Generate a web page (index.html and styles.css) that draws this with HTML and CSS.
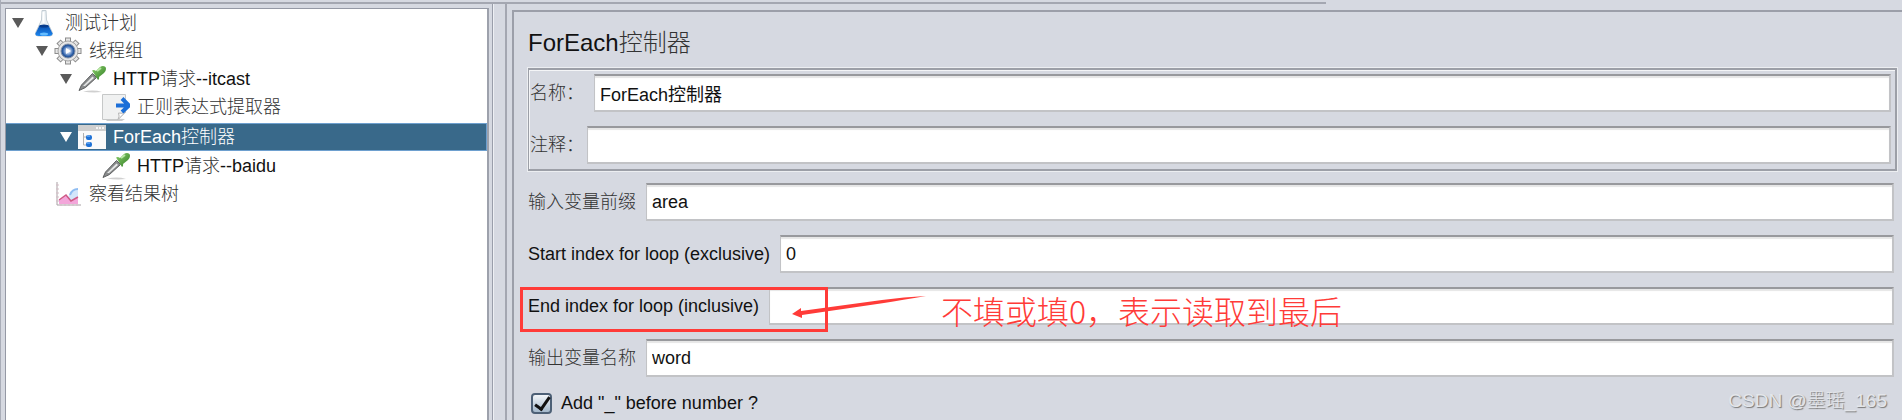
FILE: index.html
```
<!DOCTYPE html>
<html lang="zh-CN">
<head>
	<meta charset="UTF-8">
	<title>ForEach控制器</title>
	<link rel="stylesheet" href="styles.css">
</head>
<body>
	<svg class="defs" aria-hidden="true">
		<defs>
			<linearGradient id="gGreen" x1="0" y1="0" x2="1" y2="1">
				<stop offset="0" stop-color="#8fd070"/>
				<stop offset="1" stop-color="#2f7d22"/>
			</linearGradient>
			<linearGradient id="gBlue" x1="0" y1="0" x2="0" y2="1">
				<stop offset="0" stop-color="#0a4fae"/>
				<stop offset="1" stop-color="#1c86f0"/>
			</linearGradient>
			<radialGradient id="gBall">
				<stop offset="0" stop-color="#f4f8ff"/>
				<stop offset="0.35" stop-color="#a9c0e4"/>
				<stop offset="0.75" stop-color="#2c5fa8"/>
				<stop offset="1" stop-color="#1d4482"/>
			</radialGradient>
			<symbol id="dropper" viewBox="0 0 28 28">
				<path d="M5 26.500Q16 24.500 24 27Q14 28 5 26.500Z" fill="#d0d0d0"/>
				<path d="M1 25.500L3.500 20L14.500 8.500L18.500 12.500L7.500 22.500Z" fill="#8a8c8d" stroke="#5d5f60" stroke-width="1"/>
				<path d="M5 21L14.500 11.500L16 13L7 21Z" fill="#e8e9e9"/>
				<path d="M14 5.500Q16 4.500 18 6L22 2Q25 0 27.500 2Q29 5 26 8L21 12Q21.500 14 20 15Z" fill="url(#gGreen)"/>
				<path d="M19 6L23 3" stroke="#b9e8a4" stroke-width="2"/>
			</symbol>
		</defs>
	</svg>

	<div class="toolbar-line"></div>
	<div class="main">
		<div class="tree-wrap">
			<ul class="tree">
				<li class="lv0">
					<span class="arr"></span>
					<span class="ico"><svg width="20" height="28" viewBox="0 0 20 28">
						<path d="M8 1.500L7.500 11L1.500 24Q1 27 4 27H16Q19 27 18.500 24L12.500 11L12 1.500Z" fill="#eaf0f4" stroke="#c3cdd4"/>
						<path d="M5.500 16.500H14.500L18.500 24.500Q18 27 15 27H5Q1 27 1.500 24.500Z" fill="url(#gBlue)"/>
						<ellipse cx="10" cy="17" rx="4.500" ry="1.500" fill="#073b8c"/>
						<path d="M9.500 3V14" stroke="#fff" stroke-width="2"/>
						<ellipse cx="10" cy="25" rx="4" ry="1.500" fill="#64bcff"/>
					</svg></span>
					<span class="txt zh">测试计划</span>
				</li>
				<li class="lv1">
					<span class="arr"></span>
					<span class="ico"><svg width="28" height="28" viewBox="0 0 28 28">
						<g fill="none" stroke="#8c8c8c" stroke-width="6">
							<path d="M14 0.500V27.500M0.500 14H27.500M4.500 4.500L23.500 23.500M23.500 4.500L4.500 23.500"/>
						</g>
						<g fill="none" stroke="#e6e6e6" stroke-width="4">
							<path d="M14 1.500V26.500M1.500 14H26.500M5.200 5.200L22.800 22.800M22.800 5.200L5.200 22.800"/>
						</g>
						<circle cx="14" cy="14" r="10" fill="#e6e6e6" stroke="#a4a4a4"/>
						<circle cx="14" cy="14" r="7" fill="url(#gBall)" stroke="#8291a8"/>
						<path d="M12 11L17 14L12 17Z" fill="#fff"/>
					</svg></span>
					<span class="txt zh">线程组</span>
				</li>
				<li class="lv2">
					<span class="arr"></span>
					<span class="ico"><svg width="28" height="28"><use href="#dropper"/></svg></span>
					<span class="txt">HTTP<span class="zh">请求</span>--itcast</span>
				</li>
				<li class="lv3">
					<span class="arr none"></span>
					<span class="ico"><svg width="28" height="28" viewBox="0 0 28 28">
						<path d="M4 27Q14 25 23 26L20 28H5Z" fill="#ccc"/>
						<path d="M0.500 1.500H23.500V19L16 26.500H0.500Z" fill="#f0f1f1" stroke="#c6c8c8"/>
						<path d="M16 26.500Q18 23 16.500 20Q20 21 23.500 19Z" fill="#fff" stroke="#b5b5b5"/>
						<path d="M14 12.500H26M20 5.500L27 12.500L20 19" fill="none" stroke="#1c6fd8" stroke-width="4"/>
					</svg></span>
					<span class="txt zh">正则表达式提取器</span>
				</li>
				<li class="lv2 selected">
					<span class="arr"></span>
					<span class="ico"><svg width="28" height="26" viewBox="0 0 28 26">
						<rect x="0" y="1" width="28" height="24" fill="#fafafa"/>
						<rect x="0" y="1" width="28" height="6" fill="#cfcfcf"/>
						<path d="M18 4H26" stroke="#f5f5f5" stroke-width="2" stroke-dasharray="2 1"/>
						<path d="M5.500 9V21M5.500 13H9M5.500 21H9" fill="none" stroke="#b0b0b0"/>
						<rect x="8" y="11" width="6" height="5" rx="2" fill="#1f72d6"/>
						<rect x="8" y="18" width="6" height="5" rx="2" fill="#1f72d6"/>
						<path d="M9 12H12M9 19H12" stroke="#8cc4ff"/>
					</svg></span>
					<span class="txt">ForEach<span class="zh">控制器</span></span>
				</li>
				<li class="lv3">
					<span class="arr none"></span>
					<span class="ico"><svg width="28" height="28"><use href="#dropper"/></svg></span>
					<span class="txt">HTTP<span class="zh">请求</span>--baidu</span>
				</li>
				<li class="lv1">
					<span class="arr none"></span>
					<span class="ico"><svg width="26" height="26" viewBox="0 0 26 26">
						<path d="M2 1V24H26" fill="none" stroke="#a8a0a4"/>
						<path d="M1 4H4M1 8H4M1 12H4M1 16H4M1 20H4M6 22V25M10 22V25M14 22V25M18 22V25M22 22V25" stroke="#d3bcc5"/>
						<path d="M13 17Q15 8 23 8V22H13Z" fill="#d3e6fb"/>
						<path d="M15 14Q17 8 23 8" fill="none" stroke="#8fbdf2" stroke-width="2"/>
						<path d="M4 19L11 14L16 20L23 16V23H4Z" fill="#f3a6da"/>
						<path d="M4 19L11 14L16 20L23 16" fill="none" stroke="#cf5a86" stroke-width="1.500"/>
					</svg></span>
					<span class="txt zh">察看结果树</span>
				</li>
			</ul>
		</div>
		<div class="splitter"></div>
		<form class="panel">
			<h1>ForEach<span class="zh">控制器</span></h1>
			<div class="box">
				<div class="row">
					<label class="zh" for="name">名称：</label>
					<input type="text" id="name" value="ForEach控制器">
				</div>
				<div class="row tight">
					<label class="zh" for="comment">注释：</label>
					<input type="text" id="comment">
				</div>
			</div>
			<div class="row">
				<label class="zh" for="prefix">输入变量前缀</label>
				<input type="text" id="prefix" value="area">
			</div>
			<div class="row">
				<label for="start">Start index for loop (exclusive)</label>
				<input type="text" id="start" value="0">
			</div>
			<div class="row">
				<label for="end">End index for loop (inclusive)</label>
				<input type="text" id="end">
				<div class="mark"></div>
				<svg class="pointer" width="136" height="24" viewBox="0 0 136 24">
					<path d="M0 18L9 12V15L90 4Q112 1 134 0Q110 4 92 7L10 19V22Z" fill="#ff3b38"/>
				</svg>
				<span class="note">不填或填0，表示读取到最后</span>
			</div>
			<div class="row">
				<label class="zh" for="output">输出变量名称</label>
				<input type="text" id="output" value="word">
			</div>
			<div class="row check">
				<input type="checkbox" id="sep" checked>
				<label for="sep">Add "_" before number ?</label>
			</div>
		</form>
	</div>
	<div class="watermark">CSDN @墨瑶_165</div>
</body>
</html>
```
FILE: styles.css
```
*,
*::before,
*::after {
	margin: 0;
	padding: 0;
	box-sizing: border-box;
}
body {
	height: 100vh;
	overflow: hidden;
	position: relative;
	display: flex;
	flex-direction: column;
	background-color: #d6d9e1;
	border-left: 1px solid #a9adb8;
	font-family: "Liberation Sans", "Noto Sans CJK SC", sans-serif;
	font-size: 18px;
	color: #111;
}
.defs {
	position: absolute;
	width: 0;
	height: 0;
}
.zh {
	font-weight: 300;
	color: #333;
}
.toolbar-line {
	width: 1325px;
	height: 4px;
	flex: none;
	border-bottom: 2px solid #a4a7b1;
}
.main {
	flex: 1;
	min-height: 0;
	display: flex;
}

/* tree */
.tree-wrap {
	width: 492px;
	flex: none;
	padding: 4px 3px 0 4px;
	border-right: 1px solid #9a9eaa;
}
.tree {
	height: 100%;
	list-style: none;
	background-color: #fff;
	border: 1px solid #9599a5;
	border-right: 2px solid #9da1ac;
	border-bottom: 0;
}
.tree li {
	height: 28px;
	display: flex;
	align-items: center;
}
.tree .lv1 {
	padding-left: 24px;
}
.tree .lv2 {
	padding-left: 48px;
}
.tree .lv3 {
	padding-left: 72px;
}
.tree .selected {
	margin: 2px 0 1px;
	background-color: #39698a;
	border: 1px solid #6ea0cf;
	border-left: 0;
}
.selected .txt,
.selected .zh {
	color: #fff;
}
.arr {
	width: 24px;
	flex: none;
}
.arr::before {
	content: "";
	display: block;
	width: 12px;
	margin-left: 6px;
	border: 6px solid transparent;
	border-top: 10px solid #5a5a5a;
	border-bottom: 0;
}
.selected .arr::before {
	border-top-color: #fff;
}
.none::before {
	display: none;
}
.ico {
	width: 28px;
	margin-right: 7px;
	display: flex;
	justify-content: center;
}
.txt {
	line-height: 28px;
	white-space: nowrap;
}

.splitter {
	width: 14px;
	flex: none;
	margin-right: 5px;
	border-left: 1px solid #eef0f4;
	border-right: 2px solid #a4a7b1;
}

/* right panel */
.panel {
	flex: 1;
	min-width: 0;
	margin-top: 6px;
	padding: 14px 8px 0 14px;
	border-top: 2px solid #9c9fa9;
	border-left: 2px solid #9c9fa9;
	display: flex;
	flex-direction: column;
	gap: 14px;
}
h1 {
	height: 28px;
	line-height: 34px;
	font-size: 24px;
	font-weight: normal;
}
.box {
	margin-right: -3px;
	margin-bottom: -2px;
	padding: 4px 4px 5px 1px;
	border: 1px solid #9c9fa7;
	outline: 1px solid #eceef1;
	box-shadow: inset 1px 1px 0 #f4f5f7;
	border-width: 2px 2px 2px 1px;
	display: flex;
	flex-direction: column;
	gap: 14px;
}
.row {
	height: 38px;
	position: relative;
	display: flex;
	align-items: center;
	gap: 10px;
}
.tight {
	gap: 3px;
}
.row label {
	flex: none;
	line-height: 36px;
}
.row input[type="text"] {
	flex: 1;
	min-width: 0;
	height: 38px;
	padding: 0 5px;
	border: 2px solid #c2c3c6;
	border-top-color: #98999d;
	border-left-width: 1px;
	box-shadow: inset 0 2px 1px #e6e6e6;
	background-color: #fff;
	font: inherit;
	color: #111;
	outline: none;
}
.check {
	height: 24px;
	padding-left: 3px;
	gap: 9px;
}
.check input {
	appearance: none;
	width: 21px;
	height: 21px;
	border: 2px solid #4d6076;
	border-radius: 4px;
	background: linear-gradient(#f3f6f9, #a3b8cb);
	position: relative;
}
.check input:checked::after {
	content: "";
	position: absolute;
	left: 5px;
	top: -1px;
	width: 9px;
	height: 16px;
	border: solid #111;
	border-width: 0 3px 3px 0;
	transform: rotate(35deg);
}

/* red notes over the form */
.mark {
	position: absolute;
	left: -8px;
	top: 0;
	width: 308px;
	height: 45px;
	border: 3px solid #ff3b38;
}
.pointer {
	position: absolute;
	left: 264px;
	top: 9px;
}
.note {
	position: absolute;
	left: 413px;
	top: 0;
	line-height: 46px;
	font-family: "Noto Sans CJK SC", sans-serif;
	font-size: 32px;
	font-weight: 300;
	color: #ff3b38;
	white-space: nowrap;
}
.watermark {
	position: absolute;
	right: 15px;
	bottom: 5px;
	line-height: 28px;
	font-size: 19px;
	font-weight: 300;
	color: #e4e6ea;
	text-shadow: 1px 1px 1px #777;
}
```
